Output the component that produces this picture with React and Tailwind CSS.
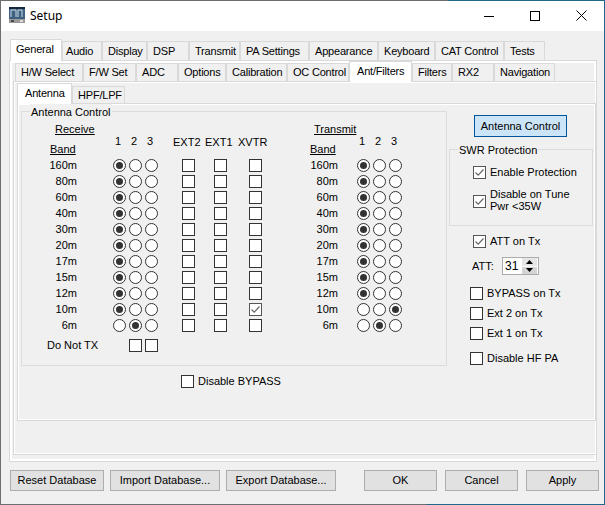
import React from 'react';

const BANDS = ['160m', '80m', '60m', '40m', '30m', '20m', '17m', '15m', '12m', '10m', '6m'];

const OUTER_TABS = [
  { label: 'General', w: 'w-[52px]', active: true, pad: 'pl-[5px]' },
  { label: 'Audio', w: 'w-[40px]', pad: 'pl-[3px]' },
  { label: 'Display', w: 'w-[45px]' },
  { label: 'DSP', w: 'w-[42px]' },
  { label: 'Transmit', w: 'w-[51px]' },
  { label: 'PA Settings', w: 'w-[69px]' },
  { label: 'Appearance', w: 'w-[69px]' },
  { label: 'Keyboard', w: 'w-[57px]' },
  { label: 'CAT Control', w: 'w-[69px]' },
  { label: 'Tests', w: 'w-[41px]' },
];

const MIDDLE_TABS = [
  { label: 'H/W Select', w: 'w-[68px]' },
  { label: 'F/W Set', w: 'w-[53px]' },
  { label: 'ADC', w: 'w-[42px]' },
  { label: 'Options', w: 'w-[48px]' },
  { label: 'Calibration', w: 'w-[61px]' },
  { label: 'OC Control', w: 'w-[62px]' },
  { label: 'Ant/Filters', w: 'w-[63px]', active: true },
  { label: 'Filters', w: 'w-[40px]' },
  { label: 'RX2', w: 'w-[42px]' },
  { label: 'Navigation', w: 'w-[61px]' },
];

function Tab({ label, w, active, height, activeHeight, pad }) {
  return (
    <div
      className={`${w} ${active ? `${activeHeight} relative z-10 -mb-px bg-white pb-[2px] ${pad || 'pl-[7px]'}` : `${height} bg-[#f0f0f0] ${pad || 'pl-[5px]'}`} flex shrink-0 items-center border border-b-0 border-[#d9d9d9] tracking-[-0.2px] whitespace-nowrap`}
    >
      {label}
    </div>
  );
}

function Radio({ checked }) {
  return (
    <div className="flex h-4 w-4 items-center justify-center">
      <div className="flex h-[13px] w-[13px] items-center justify-center rounded-full border border-[#333333] bg-white">
        {checked && <div className="h-[7px] w-[7px] rounded-full bg-[#333333]" />}
      </div>
    </div>
  );
}

function Check({ checked, className = '' }) {
  return (
    <div className={`flex h-[13px] w-[13px] shrink-0 items-center justify-center border bg-white ${checked ? 'border-[#555555]' : 'border-[#333333]'} ${className}`}>
      {checked && (
        <svg width="11" height="11" viewBox="0 0 11 11" fill="none">
          <path d="M1.5 5.5 L4.2 8.2 L9.5 2.5" stroke="#666666" strokeWidth="1.2" />
        </svg>
      )}
    </div>
  );
}

function CheckRow({ label, checked, className = '' }) {
  return (
    <div className={`flex h-[14px] items-center gap-1 whitespace-nowrap ${className}`}>
      <Check checked={checked} />
      <span>{label}</span>
    </div>
  );
}

function Button({ children, className = '' }) {
  return (
    <div className={`flex h-[21px] items-center justify-center border border-[#adadad] bg-[#e1e1e1] ${className}`}>
      {children}
    </div>
  );
}

function Legend({ children, className = '' }) {
  return <div className={`absolute -top-[8px] bg-[#f0f0f0] px-px whitespace-nowrap ${className}`}>{children}</div>;
}

function WindowIcon() {
  return (
    <svg width="16" height="17" viewBox="0 0 16 17" className="ml-2 shrink-0">
      <rect x="0" y="0" width="16" height="12" fill="#3f6280" />
      <rect x="0" y="0" width="16" height="2" fill="#16283a" />
      <path d="M2 10 V3 H7 V10 M9 10 V3 H13 V10" stroke="#c9dbe8" strokeWidth="1" fill="none" />
      <rect x="0" y="12" width="16" height="4" fill="#9a9a9a" />
      <rect x="2" y="13" width="3" height="2" fill="#4a4a4a" />
      <rect x="11" y="13" width="3" height="2" fill="#dddddd" />
    </svg>
  );
}

function TitleBar() {
  return (
    <div className="flex h-[30px] shrink-0 items-center bg-white pb-[1px]">
      <WindowIcon />
      <span className="ml-[5px] font-['Noto_Sans',sans-serif] text-xs text-black">Setup</span>
      <div className="ml-auto flex">
        <div className="flex h-[30px] w-[46px] items-center justify-center">
          <svg width="10" height="10" viewBox="0 0 10 10">
            <path d="M0 5.5 H10" stroke="#000" />
          </svg>
        </div>
        <div className="flex h-[30px] w-[46px] items-center justify-center">
          <svg width="10" height="10" viewBox="0 0 10 10">
            <rect x="0.5" y="0.5" width="9" height="9" fill="none" stroke="#000" />
          </svg>
        </div>
        <div className="flex h-[30px] w-[46px] items-center justify-center">
          <svg width="11" height="11" viewBox="0 0 11 11">
            <path d="M0.5 0.5 L10.5 10.5 M10.5 0.5 L0.5 10.5" stroke="#000" fill="none" />
          </svg>
        </div>
      </div>
    </div>
  );
}

function ReceiveBlock() {
  return (
    <div className="w-[252px] shrink-0">
      <div className="flex h-[45px]">
        <div className="w-[88px] pt-[10px]">
          <div className="h-[14px] pl-[33px] leading-[14px] underline">Receive</div>
          <div className="mt-[6px] h-[14px] pl-[28px] leading-[14px] underline">Band</div>
        </div>
        <div className="grid w-[48px] grid-cols-3 pt-[22px] text-center leading-[14px]">
          <span>1</span>
          <span>2</span>
          <span>3</span>
        </div>
        <div className="ml-[15px] flex pt-[23px] leading-[14px]">
          <span className="w-[32px]">EXT2</span>
          <span className="w-[33px]">EXT1</span>
          <span>XVTR</span>
        </div>
      </div>
      <div className="grid grid-cols-[55px_34px_16px_16px_16px_14px_31px_33px_37px] auto-rows-[16px] items-center">
        {BANDS.map((band, i) => (
          <React.Fragment key={band}>
            <div className="text-right">{band}</div>
            <div />
            <Radio checked={band !== '6m'} />
            <Radio checked={band === '6m'} />
            <Radio />
            <div />
            <Check className="justify-self-center" />
            <Check className="justify-self-center" />
            <Check className="justify-self-center" checked={i === 9} />
          </React.Fragment>
        ))}
      </div>
      <div className="mt-[5px] flex h-[14px] items-center pl-[25px]">
        <span className="w-[82px]">Do Not TX</span>
        <Check />
        <Check className="ml-[3px]" />
      </div>
    </div>
  );
}

function TransmitBlock() {
  return (
    <div>
      <div className="flex h-[45px]">
        <div className="w-[80px] pt-[10px]">
          <div className="h-[14px] pl-[40px] leading-[14px] underline">Transmit</div>
          <div className="mt-[6px] h-[14px] pl-[36px] leading-[14px] underline">Band</div>
        </div>
        <div className="grid w-[48px] grid-cols-3 pt-[22px] text-center leading-[14px]">
          <span>1</span>
          <span>2</span>
          <span>3</span>
        </div>
      </div>
      <div className="grid grid-cols-[64px_17px_16px_16px_16px] auto-rows-[16px] items-center">
        {BANDS.map((band, i) => (
          <React.Fragment key={band}>
            <div className="text-right">{band}</div>
            <div />
            <Radio checked={i < 9} />
            <Radio checked={band === '6m'} />
            <Radio checked={band === '10m'} />
          </React.Fragment>
        ))}
      </div>
    </div>
  );
}

function AttSpinner() {
  return (
    <div className="mt-[9px] ml-[25px] flex h-[18px] items-center">
      <span className="w-[30px]">ATT:</span>
      <div className="flex h-[18px] w-[37px] items-center justify-between border border-[#ababab] bg-white pl-[2px]">
        <span className="text-[12px]">31</span>
        <div className="mr-px flex h-4 w-[15px] flex-col gap-px">
          <div className="flex flex-1 items-center justify-center bg-[#e6e6e6]">
            <svg width="7" height="4" viewBox="0 0 7 4"><path d="M3.5 0 L7 4 H0 Z" fill="#000" /></svg>
          </div>
          <div className="flex flex-1 items-center justify-center bg-[#d4d4d4]">
            <svg width="7" height="4" viewBox="0 0 7 4"><path d="M0 0 H7 L3.5 4 Z" fill="#000" /></svg>
          </div>
        </div>
      </div>
    </div>
  );
}

function RightColumn() {
  return (
    <div className="w-[148px] shrink-0">
      <div className="mt-[11px] ml-[27px] flex h-[22px] w-[93px] items-center justify-center border border-[#005499] bg-[#cce4f7]">
        Antenna Control
      </div>
      <div className="relative mt-[12px] ml-[2px] h-[77px] w-[144px] border border-[#dcdcdc]">
        <Legend className="left-2">SWR Protection</Legend>
        <CheckRow className="mt-[15px] ml-[23px]" label="Enable Protection" checked />
        <div className="mt-[9px] ml-[23px] flex items-start gap-1">
          <Check className="mt-[7px]" checked />
          <div className="leading-[12px]">Disable on Tune<br />Pwr &lt;35W</div>
        </div>
      </div>
      <CheckRow className="mt-[8px] ml-[26px]" label="ATT on Tx" checked />
      <AttSpinner />
      <CheckRow className="mt-[11px] ml-[23px]" label="BYPASS on Tx" />
      <CheckRow className="mt-[6px] ml-[23px]" label="Ext 2 on Tx" />
      <CheckRow className="mt-[6px] ml-[23px]" label="Ext 1 on Tx" />
      <CheckRow className="mt-[11px] ml-[23px]" label="Disable HF PA" />
    </div>
  );
}

export default function App() {
  return (
    <div className="flex h-[505px] w-[605px] flex-col overflow-hidden bg-[#f0f0f0] font-['Liberation_Sans',Arial,sans-serif] text-[11px] text-black">
      <div className="flex h-px shrink-0">
        <div className="w-[448px] bg-[#6d6d6d]" />
        <div className="flex-1 bg-[#1d6a8a]" />
      </div>
      <div className="flex min-h-0 flex-1 border-r border-l border-r-[#1d6a8a] border-l-[#6d6d6d]">
        <div className="flex w-[603px] flex-col">
          <TitleBar />
          <div className="flex ml-[9px] mt-2 h-[21px] items-end">
            {OUTER_TABS.map((t) => (
              <Tab key={t.label} {...t} height="h-[19px]" activeHeight="h-[22px]" />
            ))}
          </div>
          <div className="ml-[8px] h-[402px] w-[588px] border border-[#d9d9d9] shadow-[inset_0_0_0_2px_#ffffff]">
            <div className="ml-[5px] flex h-[20px] items-end">
              {MIDDLE_TABS.map((t) => (
                <Tab key={t.label} {...t} height="h-[18px]" activeHeight="h-[21px]" />
              ))}
            </div>
            <div className="ml-[3px] h-[374px] w-[584px] border border-[#d9d9d9] bg-[#f0f0f0] pt-px shadow-[inset_0_0_0_1px_#ffffff]">
              <div className="ml-[3px] flex h-[20px] items-end">
                <Tab label="Antenna" w="w-[55px]" active height="h-[17px]" activeHeight="h-[21px]" />
                <Tab label="HPF/LPF" w="w-[53px]" height="h-[17px]" activeHeight="h-[21px]" />
              </div>
              <div className="ml-[3px] flex h-[318px] w-[579px] border border-[#d9d9d9] bg-[#f0f0f0] shadow-[inset_0_0_0_1px_#ffffff]">
                <div className="ml-[3px] mt-[7px] w-[426px] shrink-0">
                  <div className="relative flex h-[255px] border border-[#dcdcdc]">
                    <Legend className="left-2">Antenna Control</Legend>
                    <ReceiveBlock />
                    <TransmitBlock />
                  </div>
                  <CheckRow className="mt-[8px] ml-[160px]" label="Disable BYPASS" />
                </div>
                <RightColumn />
              </div>
            </div>
          </div>
          <div className="mt-2 ml-[9px] flex">
            <Button className="w-[94px]">Reset Database</Button>
            <Button className="ml-[6px] w-[110px]">Import Database...</Button>
            <Button className="ml-[6px] w-[110px]">Export Database...</Button>
            <Button className="ml-[28px] w-[73px]">OK</Button>
            <Button className="ml-2 w-[73px]">Cancel</Button>
            <Button className="ml-2 w-[73px]">Apply</Button>
          </div>
        </div>
      </div>
      <div className="flex h-px shrink-0">
        <div className="w-[427px] bg-[#6d6d6d]" />
        <div className="flex-1 bg-[#1d6a8a]" />
      </div>
    </div>
  );
}
